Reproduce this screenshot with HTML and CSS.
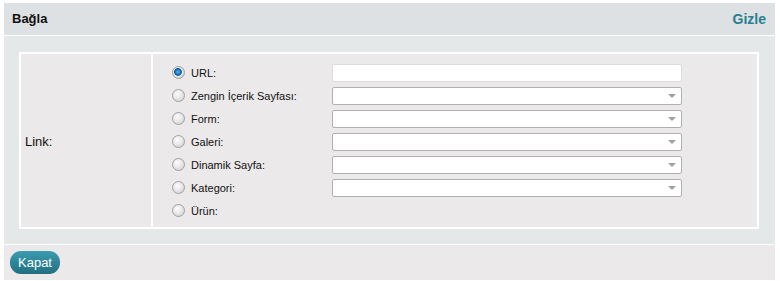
FILE: index.html
```html
<!DOCTYPE html>
<html lang="tr">
<head>
<meta charset="utf-8">
<link rel="stylesheet" href="styles.css">
</head>
<body>
<div class="panel">
  <div class="header">
    <span class="title">Bağla</span>
    <a class="toggle">Gizle</a>
  </div>
  <div class="main">
    <div class="box">
      <div class="label-cell">Link:</div>
      <div class="field-cell">
        <div class="row"><input type="radio" name="l" checked><span class="lbl">URL:</span><input type="text" class="text"></div>
        <div class="row"><input type="radio" name="l"><span class="lbl">Zengin İçerik Sayfası:</span><div class="sel"></div></div>
        <div class="row"><input type="radio" name="l"><span class="lbl">Form:</span><div class="sel"></div></div>
        <div class="row"><input type="radio" name="l"><span class="lbl">Galeri:</span><div class="sel"></div></div>
        <div class="row"><input type="radio" name="l"><span class="lbl">Dinamik Sayfa:</span><div class="sel"></div></div>
        <div class="row"><input type="radio" name="l"><span class="lbl">Kategori:</span><div class="sel"></div></div>
        <div class="row"><input type="radio" name="l"><span class="lbl">Ürün:</span></div>
      </div>
    </div>
  </div>
  <div class="footer">
    <button class="btn">Kapat</button>
  </div>
</div>
</body>
</html>
```
FILE: styles.css
```css
* { box-sizing: border-box; }
html, body { margin: 0; padding: 0; background: #fff; }
body { font-family: "Liberation Sans", Arial, sans-serif; }
.panel { margin: 3px 5px 0 4px; width: 771px; }
.header {
  height: 33px;
  background: #dde1e3;
  border-bottom: 1px solid #fff;
  display: flex;
  align-items: center;
  justify-content: space-between;
  padding: 0 9px 1px 8px;
}
.title { font-size: 13px; font-weight: bold; color: #111; }
.toggle { font-size: 14px; font-weight: bold; color: #287e91; }
.main {
  background: #e4e8e8;
  padding: 16px 16px 15px 15px;
  border-bottom: 1px solid #fff;
}
.box {
  display: flex;
  border: 2px solid #fff;
  background: #ebe9e9;
  height: 177px;
}
.label-cell {
  width: 132px;
  border-right: 2px solid #fff;
  display: flex;
  align-items: center;
  padding-left: 4px;
  font-size: 13px;
  color: #111;
  padding-top: 1px;
}
.field-cell { flex: 1; padding: 7px 0 0 19px; }
.row { display: flex; align-items: center; height: 23px; }
.row input[type=radio] {
  appearance: none;
  -webkit-appearance: none;
  margin: 0;
  width: 13px; height: 13px;
  border-radius: 50%;
  border: 1px solid #a0a0a0;
  background: radial-gradient(circle at 40% 35%, #fdfdfd 0%, #e4e4e4 55%, #c8c8c8 100%);
}
.row input[type=radio]:checked {
  background: radial-gradient(circle at 45% 45%, #5ab8f0 0, #1676c8 2.5px, #0d4f8a 3.5px, #f6f6f6 4.2px, #e0e0e0 5px, #c6c6c6 6.5px);
}
.lbl { font-size: 11px; color: #111; margin-left: 6px; width: 141px; }
.text, .sel {
  width: 350px;
  height: 18px;
  background: #fff;
  border-radius: 2px;
}
.text { border: 1px solid #dcdcdc; margin: 0; padding: 0; }
.sel {
  border: 1px solid #b0b0b0;
  position: relative;
}
.sel::after {
  content: "";
  position: absolute;
  right: 5px; top: 6px;
  border-left: 4px solid transparent;
  border-right: 4px solid transparent;
  border-top: 4px solid #a0a0a0;
}
.footer { background: #ebe9e9; height: 35px; padding: 6px 0 0 6px; }
.btn {
  width: 50px; height: 23px;
  border: none;
  border-radius: 11px;
  background: linear-gradient(#3a9db0, #226e80);
  color: #fff;
  font-family: "Liberation Sans", Arial, sans-serif;
  font-size: 13px;
  padding: 0;
}
```
